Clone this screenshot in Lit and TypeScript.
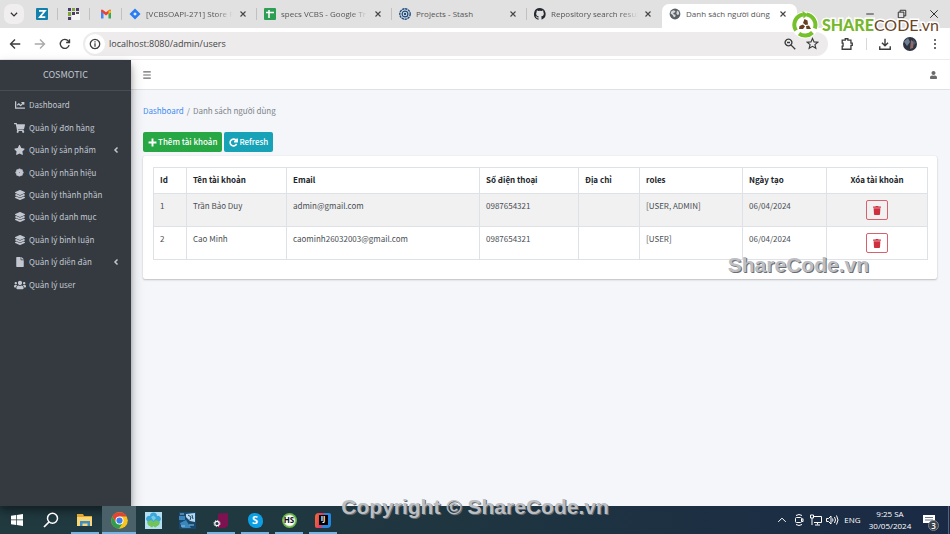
import { LitElement, html, css, svg, nothing, TemplateResult, SVGTemplateResult } from "lit";
import { customElement } from "lit/decorators.js";
import { classMap } from "lit/directives/class-map.js";

const base = css`
  * { box-sizing: border-box; }
  svg { display: block; flex: none; }
  button {
    display: flex; align-items: center; justify-content: center;
    border: 0; padding: 0; margin: 0; background: none; color: inherit; font: inherit;
  }
`;

const icon = (w: number, h: number, box: string, body: SVGTemplateResult) =>
  html`<svg width=${w} height=${h} viewBox=${box} aria-hidden="true">${body}</svg>`;
const solid = (w: number, h: number, box: string, d: string) =>
  icon(w, h, box, svg`<path fill="currentColor" d=${d}/>`);
const line = (size: number, d: string, width = 1.4) =>
  icon(size, size, "0 0 16 16", svg`<path d=${d} fill="none" stroke="currentColor" stroke-width=${width}/>`);

const CLOSE = "M4 4L12 12M12 4L4 12";

const P = {
  chart: "M496 384H64V80c0-8.84-7.16-16-16-16H16C7.16 64 0 71.16 0 80v336c0 17.67 14.33 32 32 32h464c8.84 0 16-7.16 16-16v-32c0-8.84-7.16-16-16-16zM464 96H345.94c-21.38 0-32.09 25.85-16.97 40.97l32.4 32.4L288 242.75l-73.37-73.37c-12.5-12.5-32.76-12.5-45.25 0l-68.69 68.69c-6.25 6.25-6.25 16.38 0 22.63l22.62 22.62c6.25 6.25 16.38 6.25 22.63 0L192 237.25l73.37 73.37c12.5 12.5 32.76 12.5 45.25 0l96-96 32.4 32.4c15.12 15.12 40.97 4.41 40.97-16.97V112c.01-8.84-7.15-16-15.99-16z",
  cart: "M528.12 301.319l47.273-208C578.806 78.301 567.391 64 551.99 64H159.208l-9.166-44.81C147.758 8.021 137.93 0 126.529 0H24C10.745 0 0 10.745 0 24v16c0 13.255 10.745 24 24 24h69.883l70.248 343.435C147.325 417.1 136 435.222 136 456c0 30.928 25.072 56 56 56s56-25.072 56-56c0-15.674-6.447-29.835-16.824-40h209.647C430.447 426.165 424 440.326 424 456c0 30.928 25.072 56 56 56s56-25.072 56-56c0-22.172-12.888-41.332-31.579-50.405l5.517-24.276c3.413-15.018-8.002-29.319-23.403-29.319H218.117l-6.545-32h293.145c11.206 0 20.92-7.754 23.403-18.681z",
  star: "M259.3 17.8L194 150.2 47.9 171.5c-26.2 3.8-36.7 36.1-17.7 54.6l105.7 103-25 145.5c-4.5 26.3 23.2 46 46.4 33.7L288 439.6l130.7 68.7c23.2 12.2 50.9-7.4 46.4-33.7l-25-145.5 105.7-103c19-18.5 8.5-50.8-17.7-54.6L382 150.2 316.7 17.8c-11.7-23.6-45.6-23.9-57.4 0z",
  layers: "M12.41 148.02l232.94 105.67c6.8 3.09 14.49 3.09 21.29 0l232.94-105.67c16.55-7.51 16.55-32.52 0-40.03L266.65 2.31a25.607 25.607 0 0 0-21.29 0L12.41 107.98c-16.55 7.51-16.55 32.53 0 40.04zm487.18 88.28l-58.09-26.33-161.64 73.27c-7.56 3.43-15.59 5.17-23.86 5.17s-16.29-1.74-23.86-5.17L70.51 209.97l-58.1 26.33c-16.55 7.5-16.55 32.5 0 40l232.94 105.59c6.8 3.08 14.49 3.08 21.29 0L499.59 276.3c16.55-7.5 16.55-32.5 0-40zm0 127.8l-57.87-26.23-161.86 73.37c-7.56 3.43-15.59 5.17-23.86 5.17s-16.29-1.74-23.86-5.17L70.29 337.87 12.41 364.1c-16.55 7.5-16.55 32.5 0 40l232.94 105.59c6.8 3.08 14.49 3.08 21.29 0L499.59 404.1c16.55-7.5 16.55-32.5 0-40z",
  file: "M224 136V0H24C10.7 0 0 10.7 0 24v464c0 13.3 10.7 24 24 24h336c13.3 0 24-10.7 24-24V160H248c-13.2 0-24-10.8-24-24zm160-14.1v6.1H256V0h6.1c6.4 0 12.5 2.5 17 7l97.9 98c4.5 4.500 7 10.600 7 16.900z",
  users: "M96 224c35.3 0 64-28.7 64-64s-28.7-64-64-64-64 28.7-64 64 28.7 64 64 64zm448 0c35.3 0 64-28.7 64-64s-28.7-64-64-64-64 28.7-64 64 28.7 64 64 64zm32 32h-64c-17.6 0-33.5 7.1-45.1 18.6 40.3 22.1 68.9 62 75.1 109.4h66c17.7 0 32-14.3 32-32v-32c0-35.3-28.7-64-64-64zm-256 0c61.9 0 112-50.1 112-112S381.900 32 320 32 208 82.100 208 144s50.100 112 112 112zm76.800 32h-8.300c-20.800 10-43.900 16-68.500 16s-47.600-6-68.500-16h-8.300C179.600 288 128 339.600 128 403.200V432c0 26.500 21.500 48 48 48h288c26.500 0 48-21.500 48-48v-28.800c0-63.600-51.600-115.200-115.200-115.200zm-223.700-13.400C161.500 263.100 145.600 256 128 256H64c-35.300 0-64 28.700-64 64v32c0 17.700 14.300 32 32 32h65.900c6.300-47.400 34.900-87.300 75.200-109.400z",
  trash: "M432 32H312l-9.4-18.7A24 24 0 0 0 281.1 0H166.8a23.72 23.72 0 0 0-21.4 13.3L136 32H16A16 16 0 0 0 0 48v32a16 16 0 0 0 16 16h416a16 16 0 0 0 16-16V48a16 16 0 0 0-16-16zM53.2 467a48 48 0 0 0 47.9 45h245.8a48 48 0 0 0 47.9-45L416 128H32z",
  user: "M224 256c70.7 0 128-57.3 128-128S294.7 0 224 0 96 57.3 96 128s57.3 128 128 128zm89.600 32h-16.700c-22.200 10.200-46.900 16-72.900 16s-50.600-5.800-72.900-16h-16.700C60.200 288 0 348.200 0 422.400V464c0 26.500 21.500 48 48 48h352c26.500 0 48-21.500 48-48v-41.600c0-74.200-60.200-134.400-134.400-134.400z",
  github: "M8 0a8 8 0 0 0-2.500 15.600c.4.100.5-.2.500-.4v-1.500c-2.200.5-2.700-1-2.700-1-.4-.9-.9-1.200-.9-1.200-.7-.5.100-.5.100-.5.800.1 1.200.8 1.200.8.700 1.200 1.900.9 2.300.7.100-.5.300-.9.500-1.100-1.800-.2-3.600-.9-3.600-4 0-.9.300-1.600.8-2.100-.1-.2-.4-1 .1-2.100 0 0 .7-.2 2.200.8a7.600 7.600 0 0 1 4 0c1.500-1 2.200-.8 2.200-.8.400 1.100.2 1.900.1 2.100.5.600.8 1.300.8 2.100 0 3.100-1.900 3.700-3.700 3.900.3.300.6.800.6 1.500v2.200c0 .2.100.5.500.4A8 8 0 0 0 8 0z",
};

/* ---------- Browser frame ---------- */

const ICO: Record<string, TemplateResult> = {
  zing: icon(12, 12, "0 0 12 12", svg`<rect width="12" height="12" rx="1" fill="#1180ab"/><path d="M3 2.800h6L3.800 9.200H9.300" fill="none" stroke="#fff" stroke-width="1.700"/>`),
  grid: icon(12, 12, "0 0 12 12", svg`
    <rect x="4" y="4" width="8" height="8" fill="#f6f6f6"/>
    <g fill="#4d3a6b"><rect x="0" y="0" width="3" height="3"/><rect x="8" y="0" width="3" height="3"/><rect x="4" y="4" width="3" height="3"/><rect x="0" y="9" width="3" height="3"/></g>
    <g fill="#7fa53a"><rect x="4" y="0" width="3" height="3"/><rect x="0" y="4" width="3" height="4"/></g><rect x="8" y="4" width="3" height="2" fill="#555"/>`),
  gmail: icon(12, 12, "0 0 12 12", svg`
    <path d="M1 10.500V3l2.500 2v5.500z" fill="#4285f4"/><path d="M11 10.500V3L8.500 5v5.500z" fill="#34a853"/>
    <path d="M1 3.500V2.500Q1.500 1 3 2l3 2.300L9 2q1.500-1 2 .5v1L6 7.500z" fill="#ea4335"/><path d="M11 2.500v2L8.500 6V2.400z" fill="#fbbc04"/>`),
  jira: icon(12, 12, "0 0 12 12", svg`<path d="M6 0.500L11.500 6 6 11.500 .5 6z" fill="#2a7cf0"/><path d="M6 4.200L7.800 6 6 7.800 4.200 6z" fill="#e8f0fc"/>`),
  sheets: icon(12, 12, "0 0 12 12", svg`<rect width="12" height="12" rx="1" fill="#2f9e55"/><path d="M2 4.500h8M5 2v8" stroke="#fff" stroke-width="1.500"/>`),
  stash: icon(12, 12, "0 0 12 12", svg`<circle cx="6" cy="6" r="5.200" fill="#d7e0ea" stroke="#1f4a78" stroke-width="1.400" stroke-dasharray="2.400 .6"/><circle cx="6" cy="6" r="2.900" fill="none" stroke="#1f4a78" stroke-width="1.200"/><circle cx="6" cy="6" r="1.200" fill="#1f4a78"/>`),
  github: icon(12, 12, "0 0 16 16", svg`<path d=${P.github} fill="#24292f"/>`),
  globe: icon(12, 12, "0 0 12 12", svg`<circle cx="6" cy="6" r="5.400" fill="#5b6065"/><path d="M2 3.800l2.200-1.500 2.300.6-.7 1.600-1.700.6.9 1.300 1.700.4-.5 2-1.300.4L3.600 7 1.600 5.600zM8 2.500l1.800 1.300.4 2.400-1.600.9-1.200-1.300z" fill="#d6d9dc"/>`),
};

@customElement("browser-tabs")
class BrowserTabs extends LitElement {
  static styles = [base, css`
    :host { display: flex; height: 28px; background: #e1e1e1; color: #555; font: 8px/12px "Open Sans", "Noto Sans", sans-serif; }
    .lead { flex: none; width: 26px; display: flex; align-items: center; padding-left: 4px; }
    .search { width: 20px; height: 20px; border-radius: 7px; background: #f0eeee; color: #333; }
    .pin { flex: none; width: 32px; }
    .pin, .tab { display: flex; align-items: center; position: relative; }
    .pin { justify-content: center; }
    .pin::after, .sep::after { content: ""; position: absolute; right: 0; top: 8px; width: 1px; height: 12px; background: #c2c0c0; }
    .tab { flex: 0 1 135px; min-width: 0; padding: 0 9px 0 7px; gap: 5px; }
    .title { flex: 1; min-width: 0; white-space: nowrap; }
    .fade { mask-image: linear-gradient(90deg, #000 80%, transparent); }
    .active { background: #fff; border-radius: 7px 7px 0 0; margin-top: 4px; padding-bottom: 4px; }
    .x { color: #444; width: 10px; }
    .win { margin-left: auto; display: flex; color: #333; }
    .win button { width: 32px; }
  `];
  render() {
    const tabs: [string, string, boolean][] = [
      ["jira", "[VCBSOAPI-271] Store P", false],
      ["sheets", "specs VCBS - Google Tr", false],
      ["stash", "Projects - Stash", false],
      ["github", "Repository search resul", false],
      ["globe", "Danh sách người dùng", true],
    ];
    return html`
      <div class="lead"><button class="search" aria-label="Search tabs">${line(10, "M3 6l5 5 5-5", 2)}</button></div>
      ${["zing", "grid", "gmail"].map((n) => html`<button class="pin" aria-label=${n}>${ICO[n]}</button>`)}
      ${tabs.map(([ic, title, active], i) => html`
        <div class=${classMap({ tab: true, active, sep: i < 3 })}>
          ${ICO[ic]}<span class=${classMap({ title: true, fade: !active && ic !== "stash" })}>${title}</span>
          <button class="x" aria-label="Close tab">${line(10, CLOSE, 1.8)}</button>
        </div>`)}
      <div class="win">
        <button aria-label="Minimize">${line(10, "M2 8h12", 1.6)}</button>
        <button aria-label="Restore">${line(10, "M2 5h9v9H2zM5 5V2h9v9h-3", 1.6)}</button>
        <button aria-label="Close">${line(10, "M2 2l12 12M14 2L2 14", 1.6)}</button>
      </div>`;
  }
}

@customElement("browser-toolbar")
class BrowserToolbar extends LitElement {
  static styles = [base, css`
    :host { display: flex; align-items: center; height: 32px; padding: 0 3px 0 2px; background: #fff; color: #3c3c3c; border-bottom: 1px solid #ececec; }
    .nav { width: 25px; height: 24px; }
    .off { color: #a9a9a9; }
    .bar { flex: 1; min-width: 0; display: flex; align-items: center; height: 24px; margin: 0 6px; padding: 0 4px 0 2px; border-radius: 12px; background: #edebec; }
    .info { width: 20px; height: 20px; border-radius: 50%; background: #fff; }
    .url { flex: 1; min-width: 0; border: 0; outline: 0; padding: 0 0 0 4px; background: none; color: #444; font: 9px/16px "Open Sans", "Noto Sans", sans-serif; }
    .in { width: 23px; }
    .act { width: 25px; height: 24px; }
    .rule { width: 1px; height: 12px; margin: 0 5px 0 7px; background: #d8d8d8; }
  `];
  render() {
    return html`
      <button class="nav" aria-label="Back">${line(12, "M15 8H2M8 2L2 8l6 6", 1.8)}</button>
      <button class="nav off" aria-label="Forward">${line(12, "M1 8h13M8 2l6 6-6 6", 1.8)}</button>
      <button class="nav" aria-label="Reload">${line(12, "M13.500 9.500A6 6 0 1 1 12.500 4.200L14 6M14 1.500V6H9.500", 1.8)}</button>
      <div class="bar">
        <button class="info" aria-label="Site information">${line(12, "M8 1.800a6.200 6.200 0 1 0 .01 0zM8 7v4.500M8 4.300v1.600", 1.7)}</button>
        <input class="url" aria-label="Address" value="localhost:8080/admin/users" />
        <button class="in" aria-label="Zoom">${line(12, "M6 1.500a4.500 4.500 0 1 0 .01 0zM9.500 9.500L15 15M4 6h4", 1.8)}</button>
        <button class="in" aria-label="Bookmark">${line(13, "M8 1.800l1.900 4.200 4.600.4-3.500 3 1.100 4.500L8 11.500l-4.100 2.400L5 9.400l-3.500-3 4.600-.4z", 1.4)}</button>
      </div>
      <button class="act" aria-label="Extensions">${line(14, "M2.500 3.500H6V2h3v1.500h3.500V7H14v2.500h-1.500V14h-10v-3.500h1V7h-1z", 1.5)}</button>
      <span class="rule"></span>
      <button class="act" aria-label="Downloads">${line(14, "M8 2v8M4.500 6.500L8 10l3.500-3.500M2 10.500V14h12v-3.500", 1.6)}</button>
      <button class="act" aria-label="Profile">${icon(14, 14, "0 0 14 14", svg`<circle cx="7" cy="7" r="7" fill="#2d3440"/><path d="M1 4.500L5 1l2 4-3 4z" fill="#6f7f93"/><path d="M8 3l3 2-1 6-3 1z" fill="#8d6b6a"/><path d="M10 2l3 4-2 2z" fill="#45586f"/>`)}</button>
      <button class="act" aria-label="Menu">${icon(12, 12, "0 0 12 12", svg`<g fill="#3c3c3c"><circle cx="6" cy="2" r="1"/><circle cx="6" cy="6" r="1"/><circle cx="6" cy="10" r="1"/></g>`)}</button>`;
  }
}

/* ---------- Admin application ---------- */

const seal = icon(9, 9, "0 0 16 16", svg`<g fill="currentColor">${[0, 45, 90, 135, 180, 225, 270, 315].map((a) => svg`<circle cx="8" cy="3" r="2.300" transform=${`rotate(${a} 8 8)`}/>`)}<circle cx="8" cy="8" r="5.500"/></g><circle cx="8" cy="8" r="1" fill="#7d838b"/>`);

@customElement("side-nav")
class SideNav extends LitElement {
  static styles = [base, css`
    :host { display: block; flex: none; width: 131px; background: #343a40; color: #c2c7d0; box-shadow: 0 6px 12px rgba(0,0,0,.28), 0 4px 5px rgba(0,0,0,.22); font: 8px/12px "Noto Sans CJK SC", "Open Sans", sans-serif; position: relative; }
    .brand { display: block; height: 31px; line-height: 30px; text-align: center; color: #c2c7d0; text-decoration: none; font-size: 9px; border-bottom: 1px solid #454d55; }
    ul { list-style: none; margin: 3px 0 0; padding: 0; height: 202px; display: grid; grid-auto-rows: 1fr; }
    a.link { display: flex; align-items: center; height: 100%; padding: 0 12px 0 13px; gap: 3px; color: inherit; text-decoration: none; }
    .ic { width: 13px; display: flex; justify-content: center; }
    .label { flex: 1; white-space: nowrap; }
  `];
  render() {
    const L = () => solid(10, 10, "0 0 512 512", P.layers);
    const items: [TemplateResult, string, boolean?][] = [
      [solid(10, 10, "0 0 512 512", P.chart), "Dashboard"],
      [solid(11, 10, "0 0 576 512", P.cart), "Quản lý đơn hàng"],
      [solid(11, 10, "0 0 576 512", P.star), "Quản lý sản phẩm", true],
      [seal, "Quản lý nhãn hiệu"],
      [L(), "Quản lý thành phần"],
      [L(), "Quản lý danh mục"],
      [L(), "Quản lý bình luận"],
      [solid(8, 10, "0 0 384 512", P.file), "Quản lý diễn đàn", true],
      [solid(12, 10, "0 0 640 512", P.users), "Quản lý user"],
    ];
    return html`
      <a class="brand" href="#">COSMOTIC</a>
      <ul>${items.map(([ic, label, more]) => html`
        <li><a class="link" href="#"><span class="ic">${ic}</span><span class="label">${label}</span>
        ${more ? icon(6, 8, "0 0 6 8", svg`<path d="M4.500 1.500L2 4l2.500 2.500" fill="none" stroke="currentColor" stroke-width="1.500"/>`) : nothing}</a></li>`)}
      </ul>`;
  }
}

@customElement("user-list")
class UserList extends LitElement {
  static styles = [base, css`
    :host { display: block; flex: 1; min-width: 0; background: #f4f6f9; color: #4a4f54; font: 8px/12px "Noto Sans CJK SC", "Open Sans", sans-serif; }
    .top { display: flex; align-items: center; justify-content: space-between; height: 30px; padding: 0 9px 0 8px; background: #fff; border-bottom: 1px solid #dee2e6; color: #6a6a6a; }
    .top button { width: 16px; height: 16px; }
    .body { padding: 15px 13px 0 12px; }
    .crumbs { display: flex; gap: 3px; color: #7d848b; }
    .crumbs a { color: #3f8cf0; text-decoration: none; }
    .tools { display: flex; gap: 2px; margin: 15px 0 4px; }
    .btn { height: 20px; padding: 0 5px; gap: 1px; border-radius: 2px; color: #fff; font-weight: 500; white-space: nowrap; }
    .add { background: #28a745; }
    .reload { background: #17a2b8; }
    .card { background: #fff; border-radius: 2px; padding: 11px 11px 19px 10px; box-shadow: 0 0 1px rgba(0,0,0,.13), 0 1px 2px rgba(0,0,0,.22); }
    table { width: 100%; table-layout: fixed; border-collapse: collapse; }
    th, td { border: 1px solid #dee2e6; padding: 6px; text-align: left; vertical-align: top; white-space: nowrap; }
    th { color: #212529; font-weight: 700; height: 26px; }
    .c-id { width: 33px; } .c-name { width: 100px; } .c-mail { width: 193px; } .c-tel { width: 99px; }
    .c-adr { width: 61px; } .c-role { width: 103px; } .c-date { width: 84px; } .c-del { width: 101px; }
    .odd { background: #f1f1f1; }
    th.mid { text-align: center; }
    .del { width: 22px; height: 20px; margin: 0 auto; border: 1px solid #d5626d; border-radius: 2px; color: #cf3040; }
  `];
  render() {
    const rows = [
      ["1", "Trần Bảo Duy", "admin@gmail.com", "0987654321", "", "[USER, ADMIN]", "06/04/2024"],
      ["2", "Cao Minh", "caominh26032003@gmail.com", "0987654321", "", "[USER]", "06/04/2024"],
    ];
    return html`
      <header class="top">
        <button aria-label="Toggle menu">${line(10, "M2 3h12M2 8h12M2 13h12", 1.8)}</button>
        <button aria-label="Account">${solid(7, 8, "0 0 448 512", P.user)}</button>
      </header>
      <main class="body">
        <nav class="crumbs"><a href="#">Dashboard</a><span>/</span><span>Danh sách người dùng</span></nav>
        <div class="tools">
          <button class="btn add">${line(9, "M8 1v14M1 8h14", 3.4)}Thêm tài khoản</button>
          <button class="btn reload">${line(9, "M13.500 10.500A6 6 0 1 1 12.500 4L13.500 6M14.500 1V6.500H9", 2.8)}Refresh</button>
        </div>
        <section class="card">
          <table>
            <colgroup>${["id", "name", "mail", "tel", "adr", "role", "date", "del"].map((c) => html`<col class=${"c-" + c} />`)}</colgroup>
            <thead><tr>
              ${["Id", "Tên tài khoản", "Email", "Số điện thoại", "Địa chỉ", "roles", "Ngày tạo"].map((t) => html`<th scope="col">${t}</th>`)}
              <th scope="col" class="mid">Xóa tài khoản</th>
            </tr></thead>
            <tbody>${rows.map((r, i) => html`
              <tr class=${i % 2 ? "even" : "odd"}>${r.map((c) => html`<td>${c}</td>`)}
                <td><button class="del" aria-label="Xóa tài khoản">${solid(8, 9, "0 0 448 512", P.trash)}</button></td>
              </tr>`)}
            </tbody>
          </table>
        </section>
      </main>`;
  }
}

/* ---------- Desktop taskbar ---------- */

const APPS: [string, TemplateResult, string][] = [
  ["Start", icon(12, 12, "0 0 12 12", svg`<path fill="#fff" d="M0 1.700L5.200 1v4.600H0zM5.900.900L12 0v5.600H5.900zM0 6.300h5.200V11L0 10.300zM5.900 6.300H12V12l-6.100-.9z"/>`), ""],
  ["Search", icon(16, 16, "0 0 16 16", svg`<circle cx="9.500" cy="6.200" r="5" fill="none" stroke="#fff" stroke-width="1.500"/><path d="M6 10L1 15" stroke="#fff" stroke-width="1.700"/>`), ""],
  ["Files", icon(16, 16, "0 0 16 16", svg`<path d="M0 2h6l1 2h8v10H0z" fill="#e3a72f"/><path d="M0 5h15v9H0z" fill="#fad776"/><path d="M3 9h10v5h-2.500v-2.500h-5V14H3z" fill="#3f8fc4"/>`), "open"],
  ["Chrome", icon(17, 17, "0 0 17 17", svg`<circle cx="8.500" cy="8.500" r="8.300" fill="#f9c51d"/><path d="M1.300 4.400A8.300 8.300 0 0 1 15.700 4.400H8.500L5 10.500z" fill="#e04435"/><path d="M1.300 4.400L5 10.600 8.500 12.500l2.700-.7-3.200 5A8.300 8.300 0 0 1 1.300 4.400z" fill="#2f9c4e"/><circle cx="8.500" cy="8.500" r="4" fill="#fff"/><circle cx="8.500" cy="8.500" r="3.100" fill="#3b7ded"/>`), "open current"],
  ["Map", icon(17, 17, "0 0 17 17", svg`<rect width="17" height="17" fill="#b4dff0"/><path d="M2 9a3 3 0 0 1 3-5 3.500 3.500 0 0 1 7 0 3 3 0 0 1 3 5l-3 3H5z" fill="#3aa6dc"/><path d="M2 10l4-2 2.500 2L11 8l4 2-1 3-4 2.500-1.500-1.500L7 15.500 3 13z" fill="#74c25a"/><path d="M6 5l2.500-1.500L11 6l-2.500 3z" fill="#74cfe0"/>`), ""],
  ["Workbench", icon(17, 17, "0 0 17 17", svg`<rect width="17" height="17" fill="#17486d"/><path d="M7 2l9-1v9l-5-1-4-4z" fill="#b9d7ea"/><path d="M0 4h6v4H0zM1 11l6-3 5 8H3z" fill="#3b87bd"/><path d="M9 3l3 2-1 3M13 3l1 4" stroke="#17486d" fill="none"/><path d="M1 2h4M2 14h4M10 13h5" stroke="#8fc3e4"/>`), ""],
  ["Settings tool", icon(17, 17, "0 0 17 17", svg`<path d="M5 1.500L15 1v13l-3 2H5z" fill="#7c1250"/><circle cx="4" cy="11.500" r="2.200" fill="none" stroke="#fff" stroke-width="1.200"/><circle cx="4" cy="11.500" r="3.100" fill="none" stroke="#fff" stroke-width=".8" stroke-dasharray="1.200 1.200"/>`), "open"],
  ["Skype", html`<span class="round skype">S</span>`, "open"],
  ["HeidiSQL", html`<span class="round hs">HS</span>`, "open"],
  ["IntelliJ", html`<span class="ij"><span class="ijt">IJ</span></span>`, "open"],
];

@customElement("task-bar")
class TaskBar extends LitElement {
  static styles = [base, css`
    :host { display: flex; height: 28px; background: linear-gradient(90deg, #213a40, #1f3640 45%, #1a2a45); color: #fff; font: 8px/12px "Open Sans", "Noto Sans", sans-serif; }
    .app { width: 34px; position: relative; }
    .current { background: #4b6169; }
    .open::after { content: ""; position: absolute; left: 3px; right: 3px; bottom: 0; height: 2px; background: #76b4e4; }
    .current::after { left: 0; right: 0; }
    .round { width: 15px; height: 15px; border-radius: 50%; display: grid; place-items: center; font-weight: 700; }
    .skype { background: #0c9fe4; border-radius: 6px 8px; font-size: 11px; }
    .hs { background: radial-gradient(#fff 45%, #6cb544 60%); color: #111; font-size: 8px; }
    .ij { width: 16px; height: 15px; display: grid; place-items: center; background: linear-gradient(100deg, #f0623a 10%, #e0376f 40%, #2486e0 60%); border-radius: 4px 2px; }
    .ijt { width: 9px; height: 10px; background: #000; font-size: 7px; line-height: 8px; font-weight: 700; text-align: center; }
    .tray { margin-left: auto; display: flex; align-items: center; padding-right: 1px; }
    .tray button { width: 17px; height: 28px; }
    .tray .lang { width: 23px; }
    .clock { width: 52px; text-align: center; }
    .tray .note { width: 26px; margin-right: 6px; position: relative; }
    .badge { position: absolute; right: 3px; bottom: 3px; width: 11px; height: 11px; border-radius: 50%; background: #3a4149; border: 1px solid #7b828b; line-height: 9px; font-weight: 600; text-align: center; }
    .edge { width: 1px; height: 28px; background: #56637a; }
  `];
  render() {
    return html`
      ${APPS.map(([name, ic, state]) => html`<button class=${"app " + state} aria-label=${name}>${ic}</button>`)}
      <div class="tray">
        <button aria-label="Hidden icons">${line(10, "M2 11l6-6 6 6", 1.6)}</button>
        <button aria-label="Meet now">${icon(10, 14, "0 0 10 14", svg`<g fill="none" stroke="#fff"><rect x="1.500" y="4.500" width="6" height="5" rx="1"/><path d="M7.500 6.500l1.500-.8v3l-1.500-.8M2 2.500q3-2 6 0M2 11.500q3 2 6 0"/></g>`)}</button>
        <button aria-label="Network">${icon(12, 12, "0 0 12 12", svg`<g fill="none" stroke="#fff"><path d="M3 2.500h8.500v6H4M7.500 8.500v2M5 11h5M.5 1h3v3h-3zM2 4v7"/></g>`)}</button>
        <button aria-label="Volume">${icon(13, 12, "0 0 13 12", svg`<g fill="none" stroke="#fff"><path d="M.5 4.500h2L5 2v8L2.500 7.500h-2zM6.500 4.500q1 1.500 0 3M8.500 3q2 3 0 6M10.500 1.500q3 4.500 0 9"/></g>`)}</button>
        <button class="lang">ENG</button>
        <time class="clock">9:25 SA<br />30/05/2024</time>
        <button class="note" aria-label="Notifications">${icon(12, 12, "0 0 12 12", svg`<path d="M0 1h12v8H8l-2 2.500V9H0z" fill="#fff"/><path d="M2 3.500h8M2 6h8" stroke="#6b7688"/>`)}<span class="badge">3</span></button>
        <span class="edge"></span>
      </div>`;
  }
}

/* ---------- Desktop ---------- */

@customElement("app-root")
class AppRoot extends LitElement {
  static styles = [base, css`
    :host { display: flex; flex-direction: column; min-height: 100vh; position: relative; overflow: hidden; }
    .page { flex: 1; display: flex; }
    .mark { position: absolute; white-space: nowrap; pointer-events: none; color: #bcbec1; font: 700 21px/24px "Liberation Sans", Arial, sans-serif; text-shadow: 1px 1px 0 #6a6e73; }
    .m1 { right: 81px; top: 253px; }
    .m2 { left: 0; right: 0; bottom: 15px; text-align: center; }
    .logo { position: absolute; right: 11px; top: 11px; display: flex; align-items: center; gap: 3px; font: 900 16px/28px Lato, sans-serif; color: #76b82a; pointer-events: none; }
    .word { -webkit-text-stroke: 3px #fff; paint-order: stroke fill; }
    .thin { font-weight: 400; color: #6a4526; }
  `];
  render() {
    return html`
      <browser-tabs></browser-tabs>
      <browser-toolbar></browser-toolbar>
      <div class="page"><side-nav></side-nav><user-list></user-list></div>
      <task-bar></task-bar>
      <div class="logo">
        ${icon(28, 28, "0 0 28 28", svg`
          <circle cx="14" cy="14" r="13.500" fill="#fff"/>
          <path d="M12 3.500A10.500 10.500 0 0 0 5 19.500M8 22.700A10.500 10.500 0 0 0 21.500 21.500M23.800 17.500A10.500 10.500 0 0 0 15.500 3.600" fill="none" stroke="#76c02b" stroke-width="4"/>
          <path d="M11.500 0l5.500 3.500-4.500 4z" fill="#76c02b"/>
          <path d="M13.500 8l3 1.500 .5 4-2.500 .5-2.500-2zM8.500 15l3.500-1.500 2 2-2 2.500-4 0zM15 15l3-.5 2 3.500-4.500 0z" fill="#6a3f1f"/>`)}
        <span class="word">SHARE<span class="thin">CODE.vn</span></span>
      </div>
      <div class="mark m1">ShareCode.vn</div>
      <div class="mark m2">Copyright © ShareCode.vn</div>`;
  }
}
